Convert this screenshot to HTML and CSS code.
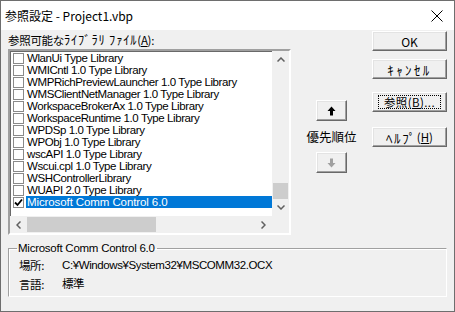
FILE: index.html
```html
<!DOCTYPE html>
<html lang="ja">
<head>
  <meta charset="UTF-8" />
  <title>参照設定 - Project1.vbp</title>
  <link rel="stylesheet" href="styles.css">
</head>
<body>
  <div class="window">
    <div class="titlebar">
      <span class="title">参照設定 - Project1.vbp</span>
      <svg class="close" width="12" height="12" viewBox="0 0 12 12">
        <path d="M0.5 0.5 L11.5 11.5 M11.5 0.5 L0.5 11.5" stroke="#000" stroke-width="1" fill="none"/>
      </svg>
    </div>

    <div class="content">
      <div class="top">
        <div class="left">
          <div class="label">参照可能な<span class="hk">ﾗｲﾌﾞﾗﾘ ﾌｧｲﾙ</span>(<u>A</u>):</div>
          <div class="listbox">
            <div class="list-area">
              <div class="items">
                <div class="item"><span class="chk"></span><span class="txt">WlanUi Type Library</span></div>
                <div class="item"><span class="chk"></span><span class="txt">WMICntl 1.0 Type Library</span></div>
                <div class="item"><span class="chk"></span><span class="txt">WMPRichPreviewLauncher 1.0 Type Library</span></div>
                <div class="item"><span class="chk"></span><span class="txt">WMSClientNetManager 1.0 Type Library</span></div>
                <div class="item"><span class="chk"></span><span class="txt">WorkspaceBrokerAx 1.0 Type Library</span></div>
                <div class="item"><span class="chk"></span><span class="txt">WorkspaceRuntime 1.0 Type Library</span></div>
                <div class="item"><span class="chk"></span><span class="txt">WPDSp 1.0 Type Library</span></div>
                <div class="item"><span class="chk"></span><span class="txt">WPObj 1.0 Type Library</span></div>
                <div class="item"><span class="chk"></span><span class="txt">wscAPI 1.0 Type Library</span></div>
                <div class="item"><span class="chk"></span><span class="txt">Wscui.cpl 1.0 Type Library</span></div>
                <div class="item"><span class="chk"></span><span class="txt">WSHControllerLibrary</span></div>
                <div class="item"><span class="chk"></span><span class="txt">WUAPI 2.0 Type Library</span></div>
                <div class="item selected">
                  <span class="chk">
                    <svg width="9" height="9" viewBox="0 0 9 9"><path d="M1 4.5 L3.5 7 L8 1.5" stroke="#000" stroke-width="1.8" fill="none"/></svg>
                  </span>
                  <span class="txt">Microsoft Comm Control 6.0</span>
                </div>
              </div>
              <div class="vscroll">
                <div class="sbtn"><svg width="8" height="5" viewBox="0 0 8 5"><path d="M0.5 4.5 L4 1 L7.5 4.5" stroke="#606060" stroke-width="1.5" fill="none"/></svg></div>
                <div class="vtrack"><div class="vthumb"></div></div>
                <div class="sbtn"><svg width="8" height="5" viewBox="0 0 8 5"><path d="M0.5 0.5 L4 4 L7.5 0.5" stroke="#606060" stroke-width="1.5" fill="none"/></svg></div>
              </div>
            </div>
            <div class="hrow">
              <div class="hscroll">
                <div class="sbtn"><svg width="5" height="8" viewBox="0 0 5 8"><path d="M4.5 0.5 L1 4 L4.5 7.5" stroke="#606060" stroke-width="1.5" fill="none"/></svg></div>
                <div class="htrack"><div class="hthumb"></div></div>
                <div class="sbtn"><svg width="5" height="8" viewBox="0 0 5 8"><path d="M0.5 0.5 L4 4 L0.5 7.5" stroke="#606060" stroke-width="1.5" fill="none"/></svg></div>
              </div>
              <div class="corner"></div>
            </div>
          </div>
        </div>

        <div class="middle">
          <div class="btn arrow">
            <svg width="9" height="10" viewBox="0 0 9 10"><path d="M4.5 0.5 L8.5 5 L6 5 L6 9.5 L3 9.5 L3 5 L0.5 5 Z" fill="#000"/></svg>
          </div>
          <div class="prio">優先順位</div>
          <div class="btn arrow">
            <svg width="9" height="10" viewBox="0 0 9 10"><path d="M4.5 9.5 L8.5 5 L6 5 L6 0.5 L3 0.5 L3 5 L0.5 5 Z" fill="#a0a0a0"/></svg>
          </div>
        </div>

        <div class="right">
          <div class="btn cmd"><span class="ok">OK</span></div>
          <div class="btn cmd"><span class="hk wide">ｷｬﾝｾﾙ</span></div>
          <div class="btn cmd gap"><span class="focus">参照(<u>B</u>)...</span></div>
          <div class="btn cmd gap2"><span class="hk help">ﾍﾙﾌﾟ</span>(<u>H</u>)</div>
        </div>
      </div>

      <fieldset class="info">
        <legend>Microsoft Comm Control 6.0</legend>
        <div class="row"><span class="key">場所:</span><span>C:¥Windows¥System32¥MSCOMM32.OCX</span></div>
        <div class="row"><span class="key">言語:</span><span>標準</span></div>
      </fieldset>
    </div>
  </div>
</body>
</html>
```

FILE: styles.css
```css
body {
  margin: 0;
  font-family: 'Liberation Sans', 'Noto Sans CJK JP', sans-serif;
  font-size: 11.5px;
  color: #000;
  background: #fff;
}
.window {
  width: 453px;
  height: 310px;
  border: 1px solid #6e6e6e;
  background: #f0f0f0;
  display: flex;
  flex-direction: column;
}
.titlebar {
  height: 29px;
  background: #fff;
  display: flex;
  align-items: center;
  justify-content: space-between;
  padding: 0 11px 0 4px;
  flex-shrink: 0;
}
.title {
  font-family: 'Noto Sans CJK JP', sans-serif;
  font-size: 12px;
}
.content {
  padding: 0 7px;
}
.top {
  display: flex;
}
.left {
  width: 283px;
}
.label {
  font-family: 'Noto Sans CJK JP', sans-serif;
  font-size: 11.5px;
  height: 19px;
  line-height: 19px;
  letter-spacing: -0.3px;
}
.hk {
  font-size: 12.5px;
  letter-spacing: 0.8px;
}
.hk.wide {
  font-size: 13px;
  letter-spacing: 2.4px;
}
.hk.help {
  font-size: 13px;
  letter-spacing: 1.6px;
}
.listbox {
  width: 279px;
  height: 182px;
  border: 2px solid;
  border-color: #a0a0a0 #fff #fff #a0a0a0;
  box-shadow: inset 1px 1px #696969;
  background: #fff;
}
.list-area {
  display: flex;
  height: 165px;
}
.items {
  width: 262px;
  padding: 1px 0 0 1px;
  overflow: hidden;
}
.item {
  height: 12px;
  display: flex;
  align-items: center;
  white-space: nowrap;
}
.chk {
  width: 9px;
  height: 9px;
  border: 1px solid #8a8a8a;
  background: #fff;
  margin: 0 2px 0 2px;
  flex-shrink: 0;
  display: flex;
  align-items: center;
  justify-content: center;
}
.txt {
  padding: 0 1px;
  line-height: 12px;
  letter-spacing: -0.4px;
}
.item.selected .txt {
  background: #0078d7;
  color: #fff;
  flex: 1;
  letter-spacing: -0.1px;
}
.vscroll {
  width: 17px;
  display: flex;
  flex-direction: column;
  background: #f0f0f0;
}
.sbtn {
  width: 17px;
  height: 17px;
  display: flex;
  align-items: center;
  justify-content: center;
  flex-shrink: 0;
}
.vtrack {
  flex: 1;
  display: flex;
  flex-direction: column;
  justify-content: flex-end;
}
.vthumb {
  height: 16px;
  margin: 0 1px;
  background: #cdcdcd;
}
.hrow {
  display: flex;
  height: 17px;
}
.hscroll {
  width: 262px;
  display: flex;
  background: #f0f0f0;
}
.htrack {
  flex: 1;
  padding: 1px 0;
}
.hthumb {
  width: 129px;
  height: 15px;
  background: #cdcdcd;
}
.corner {
  flex: 1;
  background: #f0f0f0;
}
.middle {
  width: 81px;
  display: flex;
  flex-direction: column;
  align-items: center;
  padding-top: 70px;
}
.btn {
  box-sizing: border-box;
  background: #f0f0f0;
  border: 1px solid;
  border-color: #fff #696969 #696969 #fff;
  box-shadow: inset -1px -1px #a0a0a0, inset 1px 1px #e3e3e3;
  display: flex;
  align-items: center;
  justify-content: center;
}
.arrow {
  width: 31px;
  height: 21px;
}
.prio {
  font-family: 'Noto Sans CJK JP', sans-serif;
  font-size: 12.5px;
  height: 31px;
  line-height: 32px;
}
.right {
  display: flex;
  flex-direction: column;
  padding-top: 1px;
}
.cmd {
  width: 75px;
  height: 20px;
  margin-bottom: 8px;
  font-family: 'Noto Sans CJK JP', sans-serif;
  font-size: 11.5px;
}
.ok {
  font-size: 12px;
}
.gap {
  margin-top: 5px;
}
.gap2 {
  margin-top: 7px;
}
.focus {
  border: 1px dotted #000;
  padding: 0 5px;
  line-height: 12px;
  letter-spacing: 0.4px;
}
.info {
  margin: 7px 0 0 0;
  padding: 2px 9px 0 10px;
  height: 51px;
  border: 1px solid;
  box-shadow: inset 1px 1px #fff;
  border-color: #a0a0a0 #fff #fff #a0a0a0;
}
.info legend {
  padding: 0 2px 0 1px;
  margin-left: -2px;
  letter-spacing: -0.25px;
}
.info .row {
  height: 18px;
  line-height: 18px;
  display: flex;
  letter-spacing: -0.4px;
}
.info .row + .row {
  margin-top: 1px;
}
.key {
  width: 43px;
  font-family: 'Noto Sans CJK JP', sans-serif;
}
```
